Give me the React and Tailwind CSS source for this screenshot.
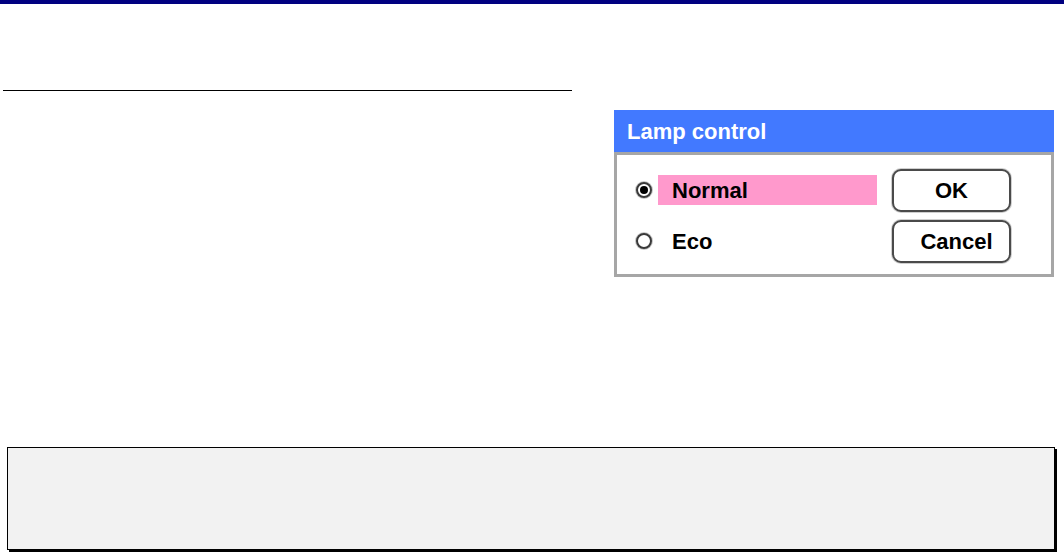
const Radio = ({ checked }) => (
  <span className="w-[16px] h-[16px] shrink-0 rounded-full border-2 border-[#3a3a3a] shadow-[0_0_0_1px_#c8c8c8] bg-white flex items-center justify-center">
    {checked && <span className="w-[8px] h-[8px] rounded-full bg-black" />}
  </span>
);

const Option = ({ label, checked }) => (
  <div className="flex items-center h-[30px]">
    <Radio checked={checked} />
    <div
      className={
        'ml-[6px] w-[219px] h-[30px] pl-[14px] flex items-center ' +
        (checked ? 'bg-[#ff99cc]' : '')
      }
    >
      {label}
    </div>
  </div>
);

const Button = ({ children }) => (
  <button className="w-[119px] h-[43px] rounded-[9px] border-2 border-[#4a4a4a] shadow-[0_0_0_1px_#cfcfcf] bg-white flex items-center justify-center">
    {children}
  </button>
);

export default function App() {
  return (
    <div className="w-[1064px] h-[553px] bg-white overflow-hidden font-['Liberation_Sans',Arial,sans-serif]">
      <div className="h-[4px] bg-[#000080]" />
      <div className="mt-[86px] ml-[3px] w-[569px] h-px bg-black" />

      <div className="flex justify-end pr-[10px] mt-[19px]">
        <div className="w-[440px]">
          <div className="h-[42px] bg-[#4279ff] flex items-center pl-[13px] text-white text-[22px] font-bold">
            Lamp control
          </div>
          <div className="h-[125px] border-[3px] border-[#a6a6a6] bg-white flex pl-[19px] pt-[14px] text-[22px] font-bold text-black">
            <div className="flex flex-col gap-[21px] mt-[6px]">
              <Option label="Normal" checked />
              <Option label="Eco" />
            </div>
            <div className="flex flex-col gap-[8px] ml-[15px]">
              <Button>OK</Button>
              <Button>
                <span className="pl-[10px]">Cancel</span>
              </Button>
            </div>
          </div>
        </div>
      </div>

      <div className="mt-[170px] ml-[7px] w-[1048px] h-[103px] border border-black bg-[#f2f2f2] shadow-[2px_2px_0_#000]" />
    </div>
  );
}
